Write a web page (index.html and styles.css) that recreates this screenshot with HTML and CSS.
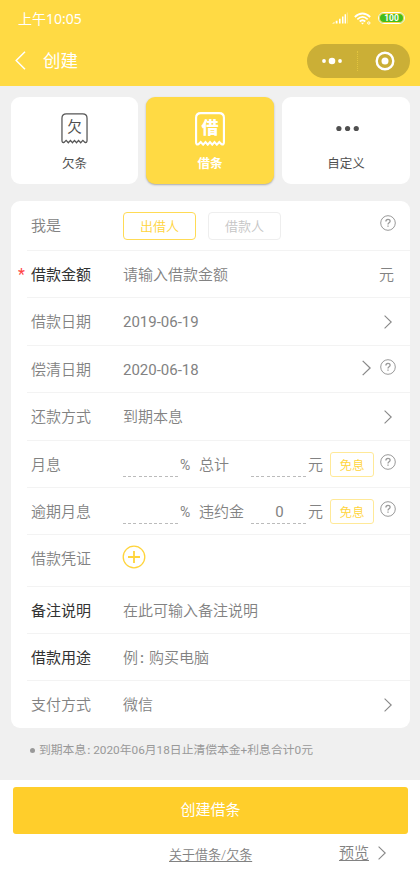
FILE: index.html
```html
<!DOCTYPE html>
<html lang="zh-CN">
<head>
<meta charset="utf-8">
<title>创建</title>
<link rel="stylesheet" href="styles.css">
</head>
<body>
<svg class="defs" width="0" height="0">
  <symbol id="help" viewBox="0 0 16 16"><circle cx="8" cy="8" r="7.3"/><path d="M5.9 6.5C5.9 3.6 10.1 3.7 10.1 6.3C10.1 7.8 8 7.8 8 9.5M8 10.6V11.8" stroke-width="1.3"/></symbol>
  <symbol id="chevron" viewBox="0 0 8 14"><path d="M.6.7L7.2 7L.6 13.3"/></symbol>
  <symbol id="ticket" viewBox="0 0 28 32" preserveAspectRatio="none"><path d="M1 28.500V5.500Q1 1 5.500 1H22.500Q27 1 27 5.500V28.500Q27 31 24.800 30.300L22.700 28.300L20.400 30.700L18.200 28.300L16.100 30.700L14 28.300L11.900 30.700L9.800 28.300L7.600 30.700L5.300 28.300L3.200 30.300Q1 31 1 28.500Z"/></symbol>
</svg>
<header class="header">
  <div class="status">
    <span class="time">上午10:05</span>
    <svg class="signal" width="16" height="12" viewBox="0 0 16 12"><path d="M0 11.500L2.500 10V11.500ZM3.700 8.800H5.500V11.500H3.700ZM7 6.800H8.600V11.500H7ZM10 4.500H11.500V11.500H10ZM12.600 2.300H14V11.500H12.600Z" fill="#fff"/><path d="M15.300 .5V11.500" stroke="#fff" stroke-opacity=".5" stroke-width=".8"/></svg>
    <svg class="wifi" width="18" height="13" viewBox="0 0 18 13" fill="none" stroke="#fff" stroke-width="1.7"><path d="M.8 5Q8.500-2 16.200 5M3.300 7.300Q8.500 2.500 13.700 7.300M5.700 9.500Q8.500 7 11.300 9.500"/><path d="M7 10.700H10L8.500 12.400Z" fill="#fff" stroke="none"/><circle cx="14.800" cy="11" r="1.200" stroke-width="1"/></svg>
    <span class="battery">100</span>
  </div>
  <div class="nav">
    <svg class="back" width="11" height="19" viewBox="0 0 11 19"><path d="M10 .8L1.200 9.500L10 18.200" fill="none" stroke="#fff" stroke-width="1.500"/></svg>
    <h1 class="title">创建</h1>
    <div class="capsule">
      <svg class="more" width="20" height="8" viewBox="0 0 20 8"><circle cx="2" cy="4" r="1.900"/><circle cx="10" cy="4" r="3.300"/><circle cx="18" cy="4" r="1.900"/></svg>
      <i class="divider"></i>
      <svg width="20" height="20" viewBox="0 0 20 20"><circle cx="10" cy="10" r="8.300" fill="none" stroke="#fff" stroke-width="2.400"/><circle cx="10" cy="10" r="3.500" fill="#fff"/></svg>
    </div>
  </div>
</header>
<main>
  <nav class="tabs">
    <div class="tab"><div class="icon"><svg><use href="#ticket"/></svg><span>欠</span></div><span>欠条</span></div>
    <div class="tab active"><div class="icon"><svg><use href="#ticket"/></svg><span>借</span></div><span>借条</span></div>
    <div class="tab"><div class="icon"><svg class="dots" viewBox="0 0 28 32"><circle cx="3" cy="16" r="2.700"/><circle cx="12" cy="16" r="2.700"/><circle cx="21" cy="16" r="2.700"/></svg></div><span>自定义</span></div>
  </nav>
  <section class="form">
    <div class="row role"><label>我是</label><div class="value"><span class="choice on">出借人</span><span class="choice">借款人</span></div><svg class="help"><use href="#help"/></svg></div>
    <div class="row strong short low"><b class="star">*</b><label>借款金额</label><div class="value">请输入借款金额</div><span class="unit">元</span></div>
    <div class="row"><label>借款日期</label><div class="value num">2019-06-19</div><svg class="chev"><use href="#chevron"/></svg></div>
    <div class="row short low"><label>偿清日期</label><div class="value num">2020-06-18</div><svg class="chev large"><use href="#chevron"/></svg><svg class="help"><use href="#help"/></svg></div>
    <div class="row"><label>还款方式</label><div class="value">到期本息</div><svg class="chev"><use href="#chevron"/></svg></div>
    <div class="row short low"><label>月息</label><div class="value"><span class="blank"></span><span class="pct">%</span><span class="sub">总计</span><span class="blank"></span><span>元</span><span class="free">免息</span></div><svg class="help"><use href="#help"/></svg></div>
    <div class="row short low"><label>逾期月息</label><div class="value"><span class="blank"></span><span class="pct">%</span><span class="sub">违约金</span><span class="blank num">0</span><span>元</span><span class="free">免息</span></div><svg class="help"><use href="#help"/></svg></div>
    <div class="row proof"><label>借款凭证</label><div class="value"><svg class="add" viewBox="0 0 24 24"><circle cx="12" cy="12" r="10.800"/><path d="M12 6V18M6 12H18" stroke-width="1.800"/></svg></div></div>
    <div class="row strong short low"><label>备注说明</label><div class="value">在此可输入备注说明</div></div>
    <div class="row strong short low"><label>借款用途</label><div class="value">例<span class="colon">:</span>购买电脑</div></div>
    <div class="row short last"><label>支付方式</label><div class="value">微信</div><svg class="chev"><use href="#chevron"/></svg></div>
  </section>
  <p class="note"><i></i>到期本息<span class="colon">:</span>2020年06月18日止清偿本金+利息合计0元</p>
</main>
<footer class="footer">
  <button class="submit">创建借条</button>
  <div class="links"><a class="about">关于借条/欠条</a><a class="preview">预览</a><svg class="chev"><use href="#chevron"/></svg></div>
</footer>
</body>
</html>
```
FILE: styles.css
```css
* { box-sizing: border-box; }
body {
  margin: 0;
  width: 420px;
  height: 874px;
  overflow: hidden;
  background: #f0f0f0;
  color: #828282;
  font: 15px/20px Roboto, "Noto Sans CJK SC", sans-serif;
  font-weight: 350;
}
svg { display: block; flex: none; fill: none; stroke-linecap: butt; }
.defs { display: none; }
.num { font-weight: 400; }
.header { height: 86px; background: #ffda44; color: #fff; }
.status { display: flex; height: 36px; padding: 1px 15px 0 18px; align-items: center; }
.time { flex: 1; font: 14px/20px "Noto Sans", "Noto Sans CJK SC", sans-serif; }
.wifi { margin: 0 0 0 6px; }
.signal { margin-top: -1px; }
.battery {
  width: 27px; height: 12px; margin: -1px 0 0 6px;
  border: 1.5px solid #fff; border-radius: 6px;
  background: #42bd1c; box-shadow: inset 0 0 0 1px #ffda44;
  font: bold 8.5px/10.500px Roboto, sans-serif; text-align: center;
}
.nav { display: flex; align-items: center; height: 49px; padding: 0 10px 0 15px; }
.title { flex: 1; margin: 1px 0 0 17px; font-size: 17.5px; line-height: 24px; font-weight: 400; }
.capsule { display: flex; width: 103px; height: 34px; border-radius: 17px; background: #cbaf36; align-items: center; padding: 0 15px; justify-content: space-between; }
.more { fill: #fff; }
.divider { height: 20px; border-left: 1px dotted #e3c53d; margin-left: 7px; margin-right: 9px; }
.tabs { display: grid; grid-template-columns: 127px 128px 128px; gap: 8px; padding: 11px 10px 0 11px; }
.tab { height: 87px; border-radius: 9px; background: #fff; color: #505050; font-size: 12.5px; font-weight: 400; display: flex; flex-direction: column; align-items: center; padding-top: 16px; }
.icon { display: grid; place-items: center; width: 27px; height: 31px; margin-bottom: 10px; }
.icon > * { grid-area: 1 / 1; }
.icon svg { width: 27px; height: 31px; stroke: #555; stroke-width: 1.3; }
.icon span { font-size: 14.500px; font-weight: 400; line-height: 18px; margin-bottom: 2px; }
.icon .dots { fill: #505050; stroke: none; margin-left: 3px; }
.active { background: #ffda44; color: #fff; font-weight: 700; box-shadow: 0 1px 2px #aaa; }
.active .icon { width: 30px; height: 34px; margin: -1px 0 8px; }
.active .icon svg { width: 30px; height: 34px; stroke: #fff; stroke-width: 2; }
.active .icon span { font-size: 17px; font-weight: 900; }
.form { margin: 17px 10px 0 11px; padding-left: 16px; border-radius: 9px; background: #fff; height: 527px; }
.row { display: flex; align-items: center; height: 48px; padding: 0 14px 0 4px; border-bottom: 1px solid #f3f3f3; }
.row.short { height: 47px; }
.row.low { padding-top: 2px; }
.row.role { height: 50px; }
.row.proof { height: 52px; padding-bottom: 3px; }
.row.last { border: 0; }
.row label { width: 92px; flex: none; }
.strong label { color: #333; font-weight: 400; }
.value { flex: 1; display: flex; align-items: center; }
.unit { margin-right: 2px; }
.star { width: 13px; margin-left: -13px; color: #ff4545; font-weight: 400; line-height: 16px; font-size: 16px; }
.help { width: 16px; height: 16px; margin: -6px 0 0; stroke: #999; stroke-width: 1; }
.chev { width: 8px; height: 14px; margin-right: 4px; stroke: #888; stroke-width: 1.1; }
.chev.large { width: 9px; height: 16px; margin: -4px 9px 0 0; }
.choice { width: 73px; height: 28px; margin: 0 12px 0 0; border: 1.5px solid #eee; border-radius: 4px; color: #c5c5c5; font-size: 13px; line-height: 28px; text-align: center; }
.choice.on { border-color: #ffdb55; color: #ffd43b; }
.blank { width: 57px; height: 25px; margin-top: -1px; line-height: 26px; text-align: center; background: repeating-linear-gradient(90deg, #bbb 0 3px, transparent 3px 5.2px) bottom / 100% 1px no-repeat; flex: none; }
.pct { width: 19px; font-size: 14px; font-weight: 400; }
.sub { width: 52px; }
.free { width: 44px; height: 25px; margin: -2px 0 0 7px; border: 1.5px solid #ffe998; border-radius: 3px; color: #ffd43b; font-size: 12.5px; line-height: 25px; text-align: center; }
.add { width: 24px; height: 24px; margin: -4px 0 0 -1px; stroke: #ffd43b; stroke-width: 1.3; }
.colon { display: inline-block; width: 11px; padding-right: 3px; text-align: center; font-weight: 500; }
.note { display: flex; align-items: center; height: 52px; margin: 0; padding: 0 0 8px 30px; font-size: 11.800px; font-weight: 400; color: #999; }
.note .colon { width: 7px; padding-right: 2px; }
.note i { width: 5px; height: 5px; margin-right: 4px; border-radius: 50%; background: #999; }
.footer { height: 94px; padding: 7px 12px 0 13px; background: #fff; }
.submit { display: block; width: 100%; height: 47px; padding: 0 0 2px; border: 0; border-radius: 3px; background: #ffce2b; color: #fff; font: inherit; font-weight: 400; }
.links { display: flex; align-items: center; height: 38px; padding-right: 19px; }
.links a { text-decoration: underline; text-underline-offset: 2px; }
.about { flex: 1; padding-left: 156px; font-size: 13px; margin-top: 3px; }
.preview { margin-right: 9px; }
.links .chev { margin: -1px 3px 0 0; }
```
